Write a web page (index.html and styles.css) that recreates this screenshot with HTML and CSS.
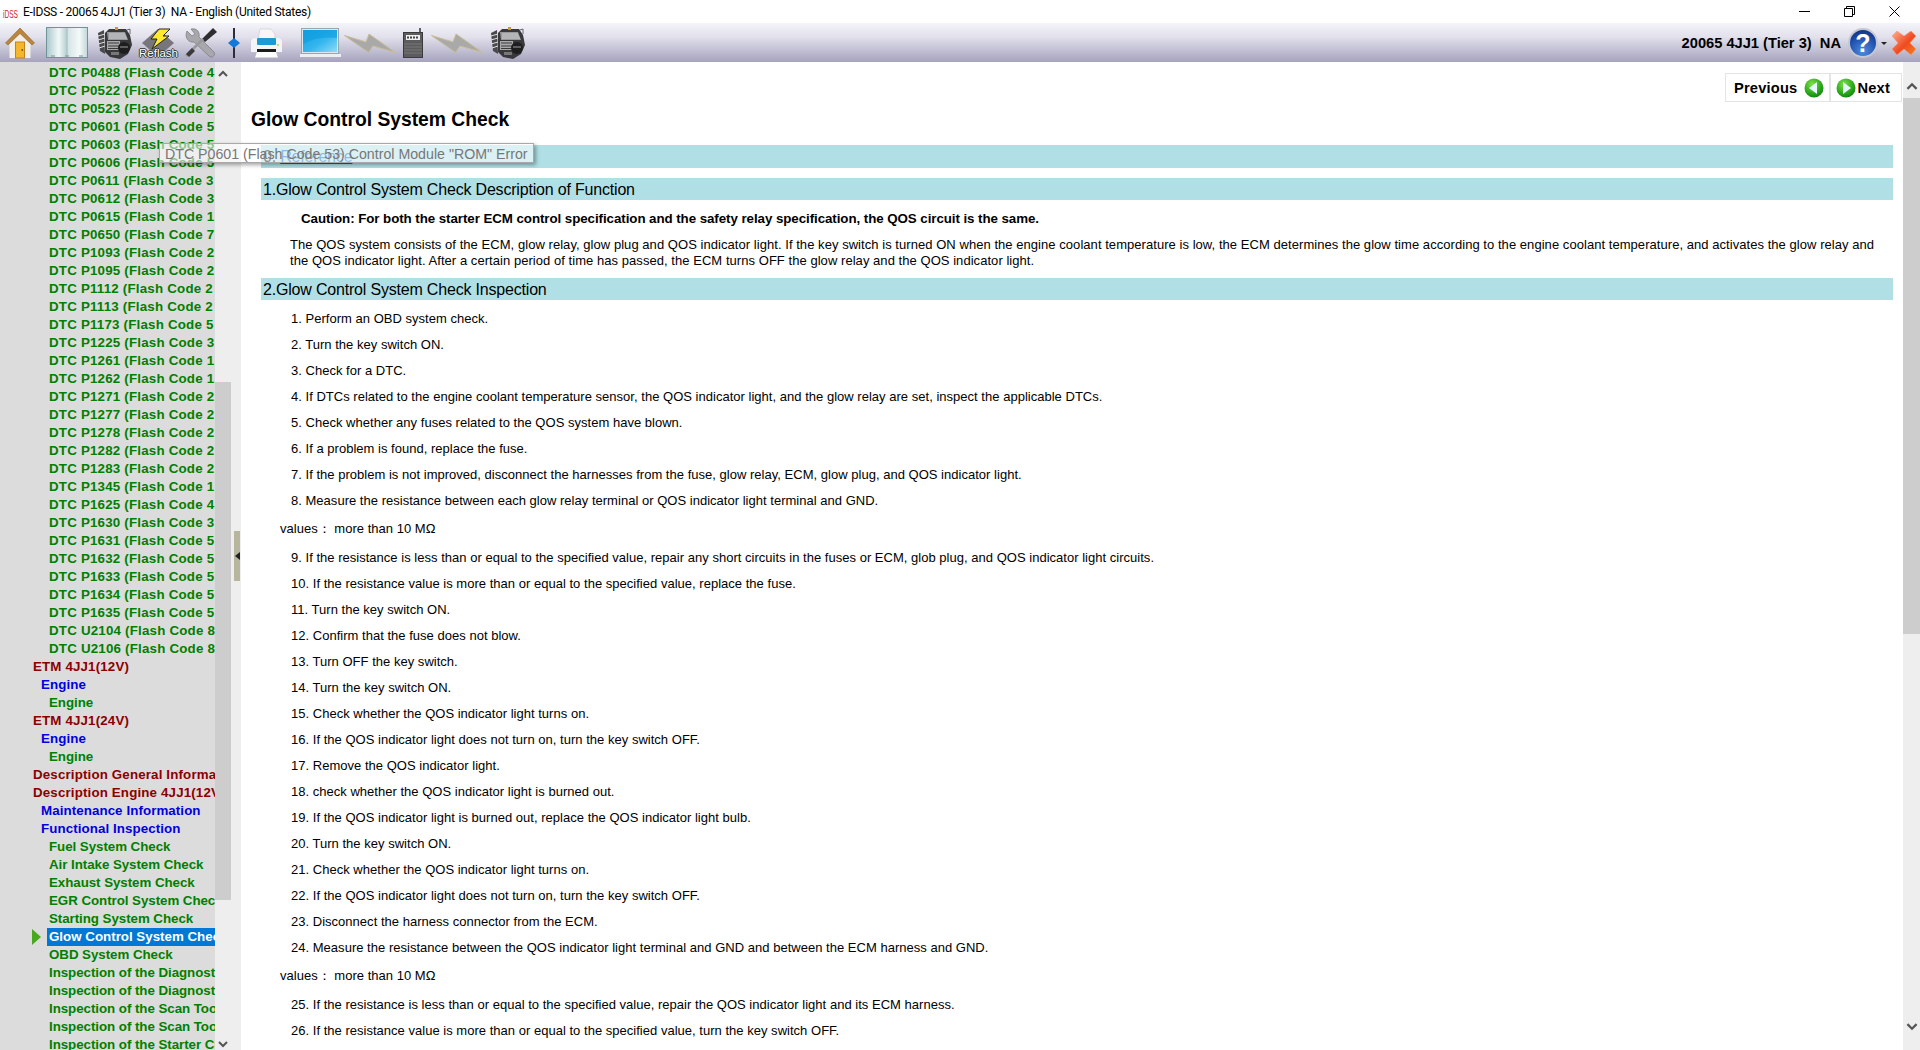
FILE: index.html
```html
<!DOCTYPE html>
<html lang="en">
<head>
  <meta charset="utf-8">
  <title>E-IDSS - 20065 4JJ1 (Tier 3) NA - English (United States)</title>
  <link rel="stylesheet" href="styles.css">
</head>
<body>
  <svg class="defs" aria-hidden="true">
    <defs>
      <linearGradient id="gBook" x1="0" x2="1" y1="0" y2="0">
        <stop offset="0" stop-color="#a9c8cc"/><stop offset=".3" stop-color="#f2f8f8"/><stop offset=".48" stop-color="#b9d2d4"/>
        <stop offset=".52" stop-color="#d4e4e6"/><stop offset=".8" stop-color="#f4f9f9"/><stop offset="1" stop-color="#c0d6d8"/>
      </linearGradient>
      <linearGradient id="gScreen" x1="0" x2="1" y1="0" y2="1">
        <stop offset="0" stop-color="#0f9fe0"/><stop offset=".55" stop-color="#35b6ee"/><stop offset="1" stop-color="#8fdcf7"/>
      </linearGradient>
      <radialGradient id="gGreen" cx=".4" cy=".3" r=".8">
        <stop offset="0" stop-color="#7fe04a"/><stop offset=".6" stop-color="#2aa81a"/><stop offset="1" stop-color="#0e7a10"/>
      </radialGradient>
      <radialGradient id="gHelp" cx=".5" cy=".8" r=".8">
        <stop offset="0" stop-color="#4f8ce0"/><stop offset=".7" stop-color="#1a4aa8"/><stop offset="1" stop-color="#12307c"/>
      </radialGradient>
      <linearGradient id="gClose" x1="0" x2="1" y1="0" y2="1">
        <stop offset="0" stop-color="#ffb090"/><stop offset=".55" stop-color="#f04a20"/><stop offset="1" stop-color="#ee8420"/>
      </linearGradient>
      <symbol id="engine" viewBox="0 0 35 32">
        <path d="M1 6 L7 3 L8 27 L3 24Z" fill="#4a4a4c"/>
        <path d="M1 9 L8 7 M1 13 L8 11 M1 17 L8 15 M2 21 L8 19" stroke="#e0e0e0" stroke-width="1"/>
        <path d="M8 6 L12 2 H29 L33 8 L35 18 L31 27 L23 32 L13 30 L8 25Z" fill="#39393b"/>
        <path d="M10 5 H28 L31 13 H11Z" fill="#97999c"/>
        <path d="M12 7 H28 M12 9 H29 M12 11 H30" stroke="#dedede" stroke-width=".8"/>
        <rect x="10" y="14" width="13" height="9" fill="#a9a9ac"/>
        <path d="M11 16 H22 M11 19 H22 M11 21.5 H22" stroke="#2c2c2c" stroke-width=".9"/>
        <circle cx="27" cy="21" r="6" fill="#1e1e1e"/>
        <path d="M23 20 H31" stroke="#8a8a8a" stroke-width="1.2"/>
        <rect x="18" y="0" width="3" height="3" fill="#c89a30"/>
        <rect x="14" y="25" width="8" height="3" fill="#77777a"/>
        <path d="M30 3 L33 2 V7" stroke="#666" fill="none"/>
      </symbol>
      <symbol id="bolt" viewBox="0 0 52 20">
        <path d="M.5 2.5 L22 9 L25 1 L51.5 19.5 L29 13 L24.5 19.5Z" fill="#a9a9a9" stroke="#cbbd96" stroke-width="1"/>
      </symbol>
    </defs>
  </svg>

  <div class="app">
    <!-- title bar -->
    <header class="titlebar">
      <svg class="app-logo" viewBox="0 0 15 14"><text x="0" y="13" textLength="15" lengthAdjust="spacingAndGlyphs">iDSS</text></svg>
      <span class="app-title">E-IDSS - 20065 4JJ1 (Tier 3)  NA - English (United States)</span>
      <div class="win-btns">
        <svg viewBox="0 0 11 11"><path d="M0 5.5H11" stroke="#000"/></svg>
        <svg viewBox="0 0 11 11"><path d="M.5 2.5H8.5V10.5H.5ZM2.5 2.5V.5H10.5V8.5H8.5" fill="none" stroke="#000"/></svg>
        <svg viewBox="0 0 11 11"><path d="M.5 .5L10.5 10.5M10.5 .5L.5 10.5" stroke="#000"/></svg>
      </div>
    </header>

    <!-- toolbar -->
    <nav class="toolbar">
      <svg class="ic ic-home" viewBox="0 0 30 32">
        <path d="M4.5 16 L15 6 L25.5 16 V31 H4.5Z" fill="#f3efe6"/>
        <path d="M15 1 L.5 16 L3 18 L15 6.5 L27 18 L29.5 16Z" fill="#b9853f" stroke="#94662a" stroke-width=".6"/>
        <rect x="10.5" y="15" width="9" height="16" fill="#f6b62c" stroke="#c4831a"/>
        <circle cx="17.3" cy="23" r=".9" fill="#7a4d10"/>
      </svg>
      <svg class="ic ic-book" viewBox="0 0 42 31">
        <rect x=".5" y=".5" width="41" height="30" fill="url(#gBook)" stroke="#6f9498"/>
        <path d="M21 1V30" stroke="#a0bcc0"/>
        <path d="M5 29H9M19 29H23M33 29H37" stroke="#7d9497"/>
      </svg>
      <svg class="ic ic-engine"><use href="#engine"/></svg>
      <span class="reflash">
        <svg class="ic-reflash" viewBox="0 0 38 30">
          <path d="M19 1 L35 15 L19 29 L3 15Z" fill="#77777b"/>
          <path d="M20 1 H31 L24 8 H30 L13 21 L18 11 H12Z" fill="#ffe92e" stroke="#222" stroke-width="1"/>
        </svg>
        <span class="reflash-label">Reflash</span>
      </span>
      <svg class="ic ic-tools" viewBox="0 0 34 30">
        <path d="M3 3 L8 8 L11 6 L7 1 C13 0 16 4 15 9 L30 24 C32 27 28 31 25 28 L10 14 C5 15 0 10 3 3Z" fill="#a8a8ac" stroke="#77777c" stroke-width=".7"/>
        <path d="M33 4 L29 0 L18 11 L21 14Z" fill="#2e2e30"/>
        <path d="M20 12 L8 24 L3 29 L1 27 L6 22 L18 10Z" fill="#9a9a9e"/>
        <path d="M8 20 L2 26 L5 29 L11 23Z" fill="#3a3a3c"/>
      </svg>
      <svg class="ic ic-split" viewBox="0 0 12 30">
        <path d="M6 0V30" stroke="#2c2c3c" stroke-width="2"/>
        <path d="M0 15 L6 10 L12 15 L6 20Z" fill="#1478d8"/>
      </svg>
      <svg class="ic ic-print" viewBox="0 0 33 30">
        <path d="M10 1 H21 L25 6 V12 H8Z" fill="#f7f7f7" stroke="#c8c8d0" stroke-width=".6"/>
        <path d="M1 14 Q1 10 6 10 H27 Q32 10 32 14 V24 H1Z" fill="#f4f4f6"/>
        <rect x="7" y="10" width="19" height="7" rx="1" fill="#1d9ad6"/>
        <rect x="7" y="21" width="19" height="3" fill="#1c1c1c"/>
        <path d="M7 24 H26 L28 29.5 H5Z" fill="#fdfdfd"/>
        <circle cx="28" cy="17" r="1" fill="#b7d24a"/>
      </svg>
      <svg class="ic ic-laptop" viewBox="0 0 41 29">
        <rect x="1.5" y=".5" width="37" height="25" fill="#dfe6ec" stroke="#98a6b0"/>
        <rect x="3" y="2" width="34" height="22" fill="url(#gScreen)"/>
        <path d="M3 16 Q18 8 37 10 V2 H3Z" fill="#0e9de0" opacity=".6"/>
        <rect x="0" y="26" width="41" height="3" fill="#eceff2"/>
      </svg>
      <svg class="ic ic-bolt"><use href="#bolt"/></svg>
      <svg class="ic ic-radio" viewBox="0 0 20 30">
        <path d="M17 0V5" stroke="#333" stroke-width="1.5"/>
        <rect x=".5" y="4.5" width="19" height="25" fill="#5c5c5e" stroke="#3a3a3a"/>
        <rect x="3" y="7" width="14" height="5" fill="#eee"/>
        <path d="M4 9.5H16" stroke="#444" stroke-width="2" stroke-dasharray="2 1"/>
        <path d="M1 16H19M1 19H19M1 22H19M1 25H19" stroke="#777"/>
      </svg>
      <svg class="ic ic-bolt2"><use href="#bolt"/></svg>
      <svg class="ic ic-engine2"><use href="#engine"/></svg>

      <div class="vehicle">
        <span class="vehicle-name">20065 4JJ1 (Tier 3)  NA</span>
        <span class="help">
          <svg viewBox="0 0 30 30"><circle cx="15" cy="15" r="14" fill="url(#gHelp)" stroke="#c4c8d4" stroke-width="2"/></svg>
          <span class="help-mark">?</span>
        </span>
        <span class="caret"></span>
        <svg class="close-x" viewBox="0 0 24 24">
          <path d="M5 0 L12 5 L19 0 L24 5 L18 12 L24 18 L19 24 L12 18 L5 24 L0 18 L6 12 L0 5Z" fill="url(#gClose)" stroke="#f0a080" stroke-width=".6" stroke-linejoin="round"/>
        </svg>
      </div>
    </nav>

    <div class="body-row">
      <!-- document tree -->
      <aside class="tree">
        <div class="tree-list">
          <div class="row code">DTC P0488 (Flash Code 4</div>
          <div class="row code">DTC P0522 (Flash Code 2</div>
          <div class="row code">DTC P0523 (Flash Code 2</div>
          <div class="row code">DTC P0601 (Flash Code 5</div>
          <div class="row code">DTC P0603 (Flash Code 5</div>
          <div class="row code">DTC P0606 (Flash Code 5</div>
          <div class="row code">DTC P0611 (Flash Code 3</div>
          <div class="row code">DTC P0612 (Flash Code 3</div>
          <div class="row code">DTC P0615 (Flash Code 1</div>
          <div class="row code">DTC P0650 (Flash Code 7</div>
          <div class="row code">DTC P1093 (Flash Code 2</div>
          <div class="row code">DTC P1095 (Flash Code 2</div>
          <div class="row code">DTC P1112 (Flash Code 2</div>
          <div class="row code">DTC P1113 (Flash Code 2</div>
          <div class="row code">DTC P1173 (Flash Code 5</div>
          <div class="row code">DTC P1225 (Flash Code 3</div>
          <div class="row code">DTC P1261 (Flash Code 1</div>
          <div class="row code">DTC P1262 (Flash Code 1</div>
          <div class="row code">DTC P1271 (Flash Code 2</div>
          <div class="row code">DTC P1277 (Flash Code 2</div>
          <div class="row code">DTC P1278 (Flash Code 2</div>
          <div class="row code">DTC P1282 (Flash Code 2</div>
          <div class="row code">DTC P1283 (Flash Code 2</div>
          <div class="row code">DTC P1345 (Flash Code 1</div>
          <div class="row code">DTC P1625 (Flash Code 4</div>
          <div class="row code">DTC P1630 (Flash Code 3</div>
          <div class="row code">DTC P1631 (Flash Code 5</div>
          <div class="row code">DTC P1632 (Flash Code 5</div>
          <div class="row code">DTC P1633 (Flash Code 5</div>
          <div class="row code">DTC P1634 (Flash Code 5</div>
          <div class="row code">DTC P1635 (Flash Code 5</div>
          <div class="row code">DTC U2104 (Flash Code 8</div>
          <div class="row code">DTC U2106 (Flash Code 8</div>
          <div class="row top">ETM 4JJ1(12V)</div>
          <div class="row mid">Engine</div>
          <div class="row leaf">Engine</div>
          <div class="row top">ETM 4JJ1(24V)</div>
          <div class="row mid">Engine</div>
          <div class="row leaf">Engine</div>
          <div class="row top">Description General Information</div>
          <div class="row top">Description Engine 4JJ1(12V)</div>
          <div class="row mid">Maintenance Information</div>
          <div class="row mid">Functional Inspection</div>
          <div class="row leaf">Fuel System Check</div>
          <div class="row leaf">Air Intake System Check</div>
          <div class="row leaf">Exhaust System Check</div>
          <div class="row leaf">EGR Control System Check</div>
          <div class="row leaf">Starting System Check</div>
          <div class="row selected">Glow Control System Check</div>
          <div class="row leaf">OBD System Check</div>
          <div class="row leaf">Inspection of the Diagnostic</div>
          <div class="row leaf">Inspection of the Diagnostic</div>
          <div class="row leaf">Inspection of the Scan Tool</div>
          <div class="row leaf">Inspection of the Scan Tool</div>
          <div class="row leaf">Inspection of the Starter Circuit</div>
        </div>
        <div class="vscroll tree-scroll">
          <svg class="chev" viewBox="0 0 10 7"><path d="M1 6 L5 2 L9 6" fill="none" stroke="#555" stroke-width="2"/></svg>
          <div class="thumb"></div>
          <svg class="chev chev-end" viewBox="0 0 10 7"><path d="M1 1 L5 5 L9 1" fill="none" stroke="#555" stroke-width="2"/></svg>
        </div>
        <div class="splitter">
          <div class="grip"><span class="grip-arrow"></span></div>
        </div>
      </aside>

      <!-- document -->
      <main class="doc">
        <div class="pager-row">
          <div class="pager">
            <div class="pager-btn">
              <span>Previous</span>
              <svg viewBox="0 0 20 20"><circle cx="10" cy="10" r="9.5" fill="url(#gGreen)"/><path d="M5 10 L13 4 V16Z" fill="#e6f6ff"/></svg>
            </div>
            <div class="pager-btn pager-next">
              <svg viewBox="0 0 20 20"><circle cx="10" cy="10" r="9.5" fill="url(#gGreen)"/><path d="M15 10 L7 4 V16Z" fill="#e6f6ff"/></svg>
              <span>Next</span>
            </div>
          </div>
        </div>

        <h1>Glow Control System Check</h1>

        <div class="sections">
          <h2 class="bar bar-ref">0. <a href="#">Reference</a></h2>
          <h2 class="bar">1.Glow Control System Check Description of Function</h2>
          <p class="caution">Caution: For both the starter ECM control specification and the safety relay specification, the QOS circuit is the same.</p>
          <p class="para">The QOS system consists of the ECM, glow relay, glow plug and QOS indicator light. If the key switch is turned ON when the engine coolant temperature is low, the ECM determines the glow time according to the engine coolant temperature, and activates the glow relay and the QOS indicator light. After a certain period of time has passed, the ECM turns OFF the glow relay and the QOS indicator light.</p>
          <h2 class="bar">2.Glow Control System Check Inspection</h2>
          <ul class="steps">
            <li>1. Perform an OBD system check.</li>
            <li>2. Turn the key switch ON.</li>
            <li>3. Check for a DTC.</li>
            <li>4. If DTCs related to the engine coolant temperature sensor, the QOS indicator light, and the glow relay are set, inspect the applicable DTCs.</li>
            <li>5. Check whether any fuses related to the QOS system have blown.</li>
            <li>6. If a problem is found, replace the fuse.</li>
            <li>7. If the problem is not improved, disconnect the harnesses from the fuse, glow relay, ECM, glow plug, and QOS indicator light.</li>
            <li>8. Measure the resistance between each glow relay terminal or QOS indicator light terminal and GND.</li>
            <li class="values">values：&nbsp;more than 10 MΩ</li>
            <li>9. If the resistance is less than or equal to the specified value, repair any short circuits in the fuses or ECM, glob plug, and QOS indicator light circuits.</li>
            <li>10. If the resistance value is more than or equal to the specified value, replace the fuse.</li>
            <li>11. Turn the key switch ON.</li>
            <li>12. Confirm that the fuse does not blow.</li>
            <li>13. Turn OFF the key switch.</li>
            <li>14. Turn the key switch ON.</li>
            <li>15. Check whether the QOS indicator light turns on.</li>
            <li>16. If the QOS indicator light does not turn on, turn the key switch OFF.</li>
            <li>17. Remove the QOS indicator light.</li>
            <li>18. check whether the QOS indicator light is burned out.</li>
            <li>19. If the QOS indicator light is burned out, replace the QOS indicator light bulb.</li>
            <li>20. Turn the key switch ON.</li>
            <li>21. Check whether the QOS indicator light turns on.</li>
            <li>22. If the QOS indicator light does not turn on, turn the key switch OFF.</li>
            <li>23. Disconnect the harness connector from the ECM.</li>
            <li>24. Measure the resistance between the QOS indicator light terminal and GND and between the ECM harness and GND.</li>
            <li class="values">values：&nbsp;more than 10 MΩ</li>
            <li>25. If the resistance is less than or equal to the specified value, repair the QOS indicator light and its ECM harness.</li>
            <li>26. If the resistance value is more than or equal to the specified value, turn the key switch OFF.</li>
          </ul>
        </div>
      </main>

      <div class="vscroll doc-scroll">
        <svg class="chev" viewBox="0 0 10 7"><path d="M1 6 L5 2 L9 6" fill="none" stroke="#555" stroke-width="2"/></svg>
        <div class="thumb"></div>
        <svg class="chev chev-end" viewBox="0 0 10 7"><path d="M1 1 L5 5 L9 1" fill="none" stroke="#555" stroke-width="2"/></svg>
      </div>
    </div>

    <!-- hover tooltip, fading in over the tree -->
    <div class="tooltip">DTC P0601 (Flash Code 53) Control Module "ROM" Error</div>
  </div>
</body>
</html>
```

FILE: styles.css
```css
* { margin: 0; padding: 0; box-sizing: border-box; }
html, body { height: 100%; overflow: hidden; }
body {
  font-family: "Liberation Sans", Arial, sans-serif;
  font-size: 13px;
  color: #000;
  background: #fff;
}
.defs { position: absolute; width: 0; height: 0; }
.app {
  position: relative;
  display: flex;
  flex-direction: column;
  height: 1050px;
  overflow: hidden;
}

/* title bar */
.titlebar {
  display: flex;
  align-items: center;
  height: 23px;
  padding-left: 3px;
  background: #fff;
}
.app-logo { width: 15px; height: 14px; margin-right: 5px; }
.app-logo text { font-size: 11px; fill: #d42020; font-family: "Liberation Sans", sans-serif; }
.app-title {
  font-family: Roboto, "Open Sans", sans-serif;
  font-size: 12px;
  letter-spacing: -0.26px;
  white-space: pre;
}
.win-btns { margin-left: auto; display: flex; height: 100%; align-items: center; padding-right: 20px; gap: 34px; }
.win-btns svg { width: 11px; height: 11px; }

/* toolbar */
.toolbar {
  display: flex;
  align-items: center;
  height: 39px;
  padding-left: 5px;
  background: linear-gradient(#f4f4fa 0%, #e2e1ec 35%, #a6a3bd 100%);
}
.ic { flex: none; display: block; height: 30px; }
.ic-home { width: 30px; height: 32px; }
.ic-book { width: 42px; height: 31px; margin-left: 11px; }
.ic-engine { width: 35px; height: 32px; margin-left: 9px; }
.reflash { position: relative; flex: none; width: 38px; height: 30px; margin-left: 7px; }
.ic-reflash { display: block; width: 38px; height: 30px; }
.reflash-label {
  position: absolute;
  left: 0;
  right: 0;
  bottom: -1px;
  text-align: center;
  font-size: 11.5px;
  line-height: 12px;
  color: #fff;
  text-shadow: -1px 0 #333, 1px 0 #333, 0 -1px #333, 0 1px #333;
}
.ic-tools { width: 34px; margin-left: 7px; }
.ic-split { width: 12px; margin-left: 10px; }
.ic-print { width: 33px; margin-left: 10px; }
.ic-laptop { width: 41px; height: 29px; margin-left: 17px; }
.ic-bolt { width: 52px; height: 20px; margin-left: 3px; }
.ic-radio { width: 20px; margin-left: 7px; }
.ic-bolt2 { width: 52px; height: 20px; margin-left: 8px; }
.ic-engine2 { width: 35px; height: 32px; margin-left: 7px; }

.vehicle { margin-left: auto; display: flex; align-items: center; padding-right: 4px; }
.vehicle-name { font-weight: bold; font-size: 14.67px; white-space: pre; }
.help { position: relative; width: 30px; height: 30px; margin-left: 7px; }
.help svg { display: block; width: 30px; height: 30px; }
.help-mark {
  position: absolute;
  inset: 0;
  text-align: center;
  font-weight: bold;
  font-size: 25px;
  line-height: 30px;
  color: #fff;
}
.caret {
  width: 0;
  height: 0;
  margin: 2px 5px 0 3px;
  border: 3px solid transparent;
  border-top-color: #222;
  border-bottom: 0;
}
.close-x { width: 24px; height: 24px; }

/* main split */
.body-row { display: flex; flex: 1; min-height: 0; }
.tree { display: flex; flex: none; width: 241px; background: #eee; }
.tree-list {
  width: 215px;
  padding-top: 2px;
  background: #dcdcdc;
  overflow: hidden;
}
.row {
  height: 18px;
  line-height: 18px;
  font-weight: bold;
  font-size: 13.33px;
  white-space: nowrap;
  overflow: hidden;
}
.code { padding-left: 49px; color: #008000; letter-spacing: 0.2px; }
.leaf { padding-left: 49px; color: #008000; letter-spacing: -0.05px; }
.top { padding-left: 33px; color: #8b0000; letter-spacing: 0.15px; }
.mid { padding-left: 41px; color: #0000e0; letter-spacing: 0.08px; }
.selected {
  position: relative;
  margin-left: 47px;
  padding-left: 2px;
  overflow: visible;
  color: #fff;
  background: #0078d7;
}
.selected::before {
  content: "";
  position: absolute;
  left: -15px;
  top: 1px;
  border-left: 9px solid #4aa81e;
  border-top: 8px solid transparent;
  border-bottom: 8px solid transparent;
}

.vscroll { display: flex; flex-direction: column; flex: none; background: #eee; }
.chev { display: block; width: 10px; height: 7px; margin: 0 auto; flex: none; }
.chev-end { margin-top: auto; }
.thumb { background: #cdcdcd; }
.tree-scroll { width: 16px; padding: 8px 0 0; }
.tree-scroll .thumb { height: 518px; margin-top: 305px; }
.tree-scroll .chev-end { margin-bottom: 2px; }
.splitter { width: 10px; }
.grip {
  display: flex;
  align-items: center;
  justify-content: center;
  width: 6px;
  height: 50px;
  margin: 469px 0 0 3px;
  background: #b6b69f;
}
.grip-arrow {
  border-right: 5px solid #222;
  border-top: 4px solid transparent;
  border-bottom: 4px solid transparent;
}
.doc-scroll { width: 17px; padding-top: 20px; }
.doc-scroll .thumb { height: 536px; margin-top: 8px; }
.doc-scroll .chev { width: 12px; height: 8px; }
.doc-scroll .chev-end { margin-top: auto; margin-bottom: 19px; }

/* document */
.doc { flex: 1; min-width: 0; overflow: hidden; padding-top: 11px; }
.pager-row { display: flex; justify-content: flex-end; padding-right: 1px; }
.pager { display: flex; height: 29px; border: 1px solid #e4e4e4; }
.pager-btn {
  display: flex;
  align-items: center;
  gap: 7px;
  padding: 0 5px 0 8px;
  font-weight: bold;
  font-size: 14.67px;
  letter-spacing: 0.2px;
}
.pager-btn svg { width: 20px; height: 20px; }
.pager-next { gap: 1px; padding: 0 11px 0 5px; border-left: 2px solid #e4e4e4; }

h1 {
  margin: 7px 0 0 10px;
  font-size: 19.3px;
  line-height: 22px;
  font-weight: bold;
}
.sections { padding: 14px 10px 0 20px; }
.bar {
  height: 22px;
  margin-bottom: 11px;
  padding: 1px 0 0 2px;
  font-size: 16px;
  font-weight: normal;
  line-height: 22px;
  letter-spacing: -0.19px;
  background: #b0e0e6;
}
.bar-ref { height: 23px; margin-bottom: 10px; }
.bar a { color: #0066cc; }
.caution { margin: 0 0 10px 40px; font-size: 13.33px; font-weight: bold; line-height: 16px; letter-spacing: -0.065px; }
.para { margin: 0 10px 9px 29px; line-height: 16px; letter-spacing: 0.05px; }
.steps { list-style: none; }
.steps li { margin: 0 0 10px 30px; line-height: 16px; letter-spacing: 0.02px; white-space: nowrap; }
.steps .values { margin: 0 0 13px 19px; padding-top: 2px; }

/* tooltip */
.tooltip {
  position: absolute;
  left: 159px;
  top: 143px;
  width: 375px;
  height: 20px;
  padding-left: 5px;
  line-height: 20px;
  font-size: 14.2px;
  white-space: nowrap;
  color: #777;
  background: rgba(255, 255, 255, 0.55);
  border: 1px solid #a8a8a8;
  box-shadow: 2px 2px 4px rgba(0, 0, 0, 0.35);
}
```
